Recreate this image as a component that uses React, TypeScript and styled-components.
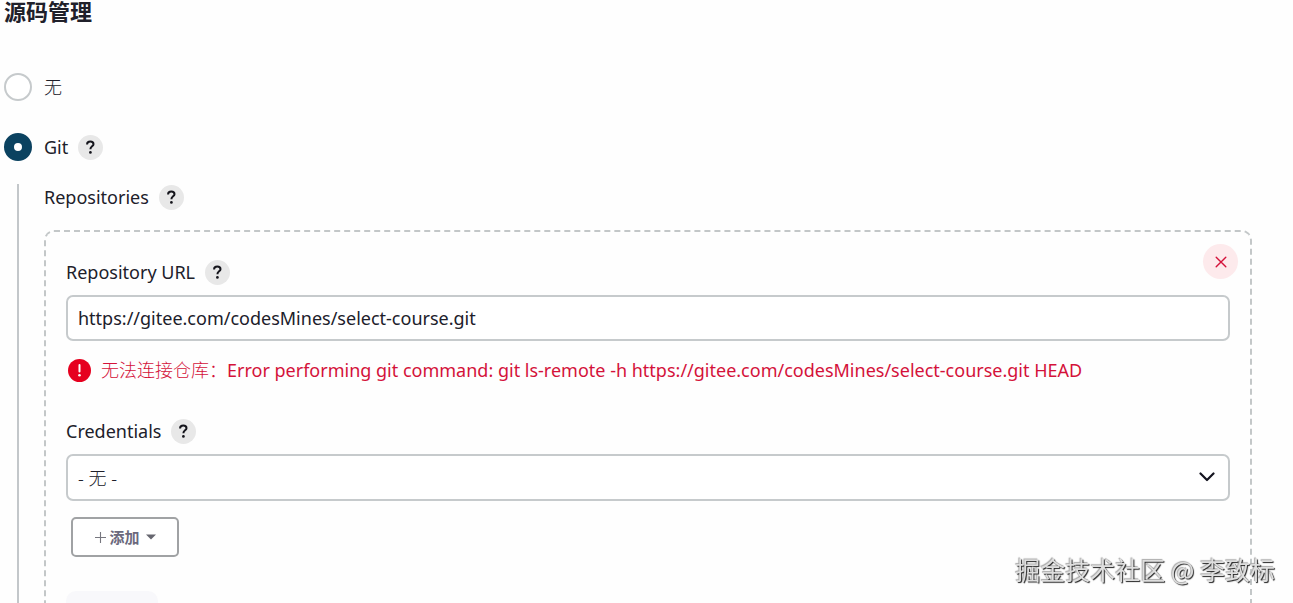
import React from 'react';
import styled, { createGlobalStyle } from 'styled-components';

const GlobalStyle = createGlobalStyle`
  *, *::before, *::after { box-sizing: border-box; }
  html, body { margin: 0; background: #fefefe; }
  body, button, input, select {
    font-family: "Noto Sans", "Noto Sans CJK SC", sans-serif;
    font-size: 18px;
    font-weight: 400;
    color: #20202a;
  }
`;

const Page = styled.main`
  height: 100vh;
  overflow: hidden;
  padding: 0 41px 0 4px;
`;

const Heading = styled.h1`
  margin: 0;
  font-size: 22px;
  line-height: 22px;
  font-weight: 700;
`;

const Options = styled.div`
  display: flex;
  flex-direction: column;
  gap: 32px;
  padding-top: 51px;
`;

const Option = styled.div`
  display: flex;
  align-items: center;
  height: 28px;
`;

const OptionLabel = styled.label`
  display: flex;
  align-items: center;
  gap: 12px;
  line-height: 28px;
`;

const Chinese = styled.span`
  font-weight: 300;
`;

const Radio = styled.input`
  appearance: none;
  flex: none;
  width: 28px;
  height: 28px;
  margin: 0;
  border: 2px solid #c6cacc;
  border-radius: 50%;
  background: #fff;
  &:checked {
    border: 10px solid #0b4260;
  }
`;

const Help = styled.button`
  flex: none;
  width: 25px;
  height: 25px;
  margin-left: 10px;
  padding: 0;
  border: 0;
  border-radius: 50%;
  background: #e8e8e8;
  display: flex;
  align-items: center;
  justify-content: center;
`;

const Nested = styled.section`
  margin: 23px 0 0 13px;
  padding-left: 25px;
  border-left: 2px solid #c3c7ca;
`;

const LabelRow = styled.div`
  display: flex;
  align-items: center;
  height: 26px;
  line-height: 26px;
`;

const Repository = styled.div`
  position: relative;
  height: 460px;
  margin-top: 20px;
  padding: 27px 20px 0;
  border: 2px dashed #c3c7c8;
  border-radius: 10px;
`;

const Remove = styled.button`
  position: absolute;
  top: 12px;
  right: 12px;
  width: 35px;
  height: 35px;
  padding: 0;
  border: 0;
  border-radius: 50%;
  background: #fdeaec;
  display: flex;
  align-items: center;
  justify-content: center;
`;

const TextField = styled.input`
  display: block;
  width: 100%;
  height: 46px;
  margin-top: 10px;
  padding: 0 10px;
  border: 2px solid #c6cacc;
  border-radius: 7px;
  background: #fff;
`;

const ErrorMessage = styled.p`
  display: flex;
  align-items: center;
  gap: 10px;
  height: 26px;
  margin: 16px 0 35px;
  padding-left: 2px;
  line-height: 26px;
  white-space: nowrap;
  color: #d4123a;
`;

const SelectWrap = styled.div`
  position: relative;
  margin-top: 10px;
  svg {
    position: absolute;
    top: 17px;
    right: 15px;
    pointer-events: none;
  }
`;

const Select = styled.select`
  display: block;
  appearance: none;
  width: 100%;
  height: 47px;
  padding: 0 10px;
  border: 2px solid #c6cacc;
  border-radius: 7px;
  background: #fff;
  font-weight: 300;
`;

const AddButton = styled.button`
  display: flex;
  align-items: center;
  justify-content: center;
  width: 108px;
  height: 40px;
  margin: 16px 0 0 5px;
  padding: 0;
  border: 2px solid #a0a2a4;
  border-radius: 5px;
  background: #fff;
  color: #6b697d;
  font-size: 15px;
  line-height: 20px;
  font-weight: 700;
  svg:first-child { margin-right: 2px; }
  svg:last-child { margin-left: 6px; }
`;

const Advanced = styled.button`
  display: block;
  width: 92px;
  height: 40px;
  margin-top: 34px;
  border: 0;
  border-radius: 10px;
  background: #f8f8fb;
`;

const Watermark = styled.div`
  position: fixed;
  right: 18px;
  bottom: 18px;
  font-size: 25px;
  line-height: 32px;
  white-space: nowrap;
  color: #dedede;
  font-family: "Noto Sans CJK SC", sans-serif;
  text-shadow: 1px 1px 1px #222, -1px -1px 1px #aaa;
`;

function HelpButton({ topic }: { topic: string }) {
  return (
    <Help type="button" aria-label={`Help for ${topic}`}>
      <svg width="11" height="15" viewBox="0 0 11 15" fill="none" aria-hidden="true">
        <path d="M2.1 4.6V4.2C2.1 2.6 3.5 1.6 5.3 1.6C7.2 1.6 8.5 2.7 8.5 4.2C8.5 6.3 5.4 6.5 5.4 9.2" stroke="#15151c" strokeWidth="2" />
        <circle cx="5.4" cy="12.4" r="1.35" fill="#15151c" />
      </svg>
    </Help>
  );
}

export default function App() {
  return (
    <>
      <GlobalStyle />
      <Page>
        <Heading>源码管理</Heading>
        <Options>
          <Option>
            <OptionLabel>
              <Radio type="radio" name="scm" value="none" />
              <Chinese>无</Chinese>
            </OptionLabel>
          </Option>
          <Option>
            <OptionLabel>
              <Radio type="radio" name="scm" value="git" defaultChecked />Git
            </OptionLabel>
            <HelpButton topic="Git" />
          </Option>
        </Options>
        <Nested>
          <LabelRow>
            <span>Repositories</span>
            <HelpButton topic="Repositories" />
          </LabelRow>
          <Repository>
            <Remove type="button" aria-label="Remove repository">
              <svg width="12" height="12" viewBox="0 0 12 12" aria-hidden="true">
                <path d="M1.2 1.2L10.8 10.8M10.8 1.2L1.2 10.8" stroke="#d4123a" strokeWidth="1.4" strokeLinecap="round" />
              </svg>
            </Remove>
            <LabelRow>
              <label htmlFor="repo-url">Repository URL</label>
              <HelpButton topic="Repository URL" />
            </LabelRow>
            <TextField id="repo-url" type="text" defaultValue="https://gitee.com/codesMines/select-course.git" />
            <ErrorMessage role="alert">
              <svg width="23" height="23" viewBox="0 0 23 23" aria-hidden="true">
                <circle cx="11.5" cy="11.5" r="11.5" fill="#e6001f" />
                <path d="M11.5 6V12.6" stroke="#fff" strokeWidth="2" strokeLinecap="round" />
                <circle cx="11.5" cy="16.3" r="1.3" fill="#fff" />
              </svg>
              <span>
                <Chinese>无法连接仓库：</Chinese>
                Error performing git command: git ls-remote -h https://gitee.com/codesMines/select-course.git HEAD
              </span>
            </ErrorMessage>
            <LabelRow>
              <label htmlFor="credentials">Credentials</label>
              <HelpButton topic="Credentials" />
            </LabelRow>
            <SelectWrap>
              <Select id="credentials" defaultValue="none">
                <option value="none">- 无 -</option>
              </Select>
              <svg width="16" height="12" viewBox="0 0 16 12" fill="none" aria-hidden="true">
                <path d="M1.5 2.5L8 9L14.5 2.5" stroke="#14141f" strokeWidth="2.2" strokeLinecap="round" strokeLinejoin="round" />
              </svg>
            </SelectWrap>
            <AddButton type="button">
              <svg width="13" height="13" viewBox="0 0 13 13" aria-hidden="true">
                <path d="M6.5 1V12M1 6.5H12" stroke="#77777f" strokeWidth="1.1" />
              </svg>
              添加
              <svg width="10" height="6" viewBox="0 0 10 6" aria-hidden="true">
                <path d="M0 0.5H10L5 5.5Z" fill="#66666f" />
              </svg>
            </AddButton>
            <Advanced type="button" aria-label="Advanced" />
          </Repository>
        </Nested>
        <Watermark>掘金技术社区 @ 李致标</Watermark>
      </Page>
    </>
  );
}
